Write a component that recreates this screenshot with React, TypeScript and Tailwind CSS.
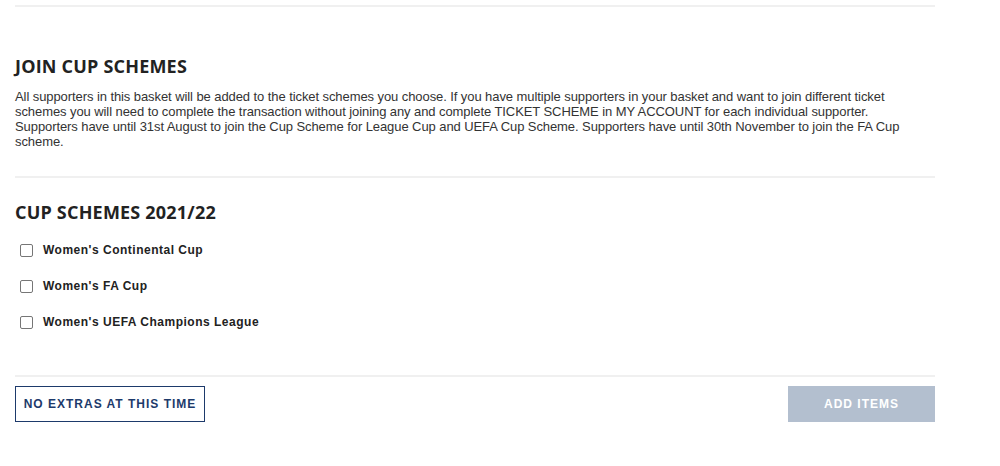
const schemes = ["Women's Continental Cup", "Women's FA Cup", "Women's UEFA Champions League"]

const App = () => {
  return (
    <div className="min-h-[466px] bg-white pt-[5px] pl-[15px]">
      <div className="w-[920px]">
        <div className="border-t-2 border-[#f0f0f0]" />

        <section className="pt-[47px] pb-[27px]">
          <h2 className="text-[18px] leading-[24px] font-bold text-[#222] font-['Open_Sans',sans-serif] tracking-[0.2px]">
            JOIN CUP SCHEMES
          </h2>
          <p className="mt-[11px] pr-[18px] text-[13px] leading-[15px] tracking-[-0.08px] text-[#333] font-['Liberation_Sans',Arial,sans-serif]">
            All supporters in this basket will be added to the ticket schemes you choose. If you have multiple supporters in your basket and want to join different ticket schemes you will need to complete the transaction without joining any and complete TICKET SCHEME in MY ACCOUNT for each individual supporter. Supporters have until 31st August to join the Cup Scheme for League Cup and UEFA Cup Scheme. Supporters have until 30th November to join the FA Cup scheme.
          </p>
        </section>

        <div className="border-t-2 border-[#f0f0f0]" />

        <section className="pt-[22px] pb-[35px]">
          <h2 className="text-[18px] leading-[24px] font-bold text-[#222] font-['Open_Sans',sans-serif] tracking-[0.2px]">
            CUP SCHEMES 2021/22
          </h2>
          <div className="mt-[8px] flex flex-col">
            {schemes.map((s) => (
              <label key={s} className="flex h-[36px] items-center gap-[10px] pl-[5px] cursor-pointer">
                <input type="checkbox" className="m-0 h-[13px] w-[13px] appearance-none rounded-[2px] border border-[#767676] bg-white" />
                <span className="text-[12px] font-bold tracking-[0.5px] text-[#222] font-['Liberation_Sans',Arial,sans-serif]">{s}</span>
              </label>
            ))}
          </div>
        </section>

        <div className="border-t-2 border-[#f0f0f0]" />

        <div className="mt-[9px] flex items-center justify-between">
          <button className="h-[36px] w-[190px] border border-[#1d3a6b] bg-white text-[12px] font-bold tracking-[1px] text-[#1d3a6b] font-['Liberation_Sans',Arial,sans-serif]">
            NO EXTRAS AT THIS TIME
          </button>
          <button className="h-[36px] w-[147px] bg-[#b3bfcf] text-[12px] font-bold tracking-[1px] text-white font-['Liberation_Sans',Arial,sans-serif]">
            ADD ITEMS
          </button>
        </div>
      </div>
    </div>
  )
}

export default App
